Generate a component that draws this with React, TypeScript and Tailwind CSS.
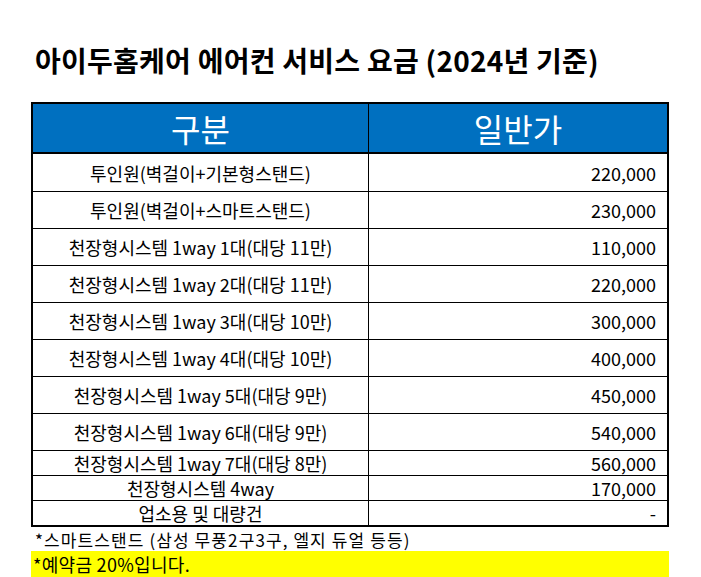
const rows: { name: string; price: string; h: string }[] = [
  { name: "투인원(벽걸이+기본형스탠드)", price: "220,000", h: "h-[38px]" },
  { name: "투인원(벽걸이+스마트스탠드)", price: "230,000", h: "h-[37px]" },
  { name: "천장형시스템 1way 1대(대당 11만)", price: "110,000", h: "h-[37px]" },
  { name: "천장형시스템 1way 2대(대당 11만)", price: "220,000", h: "h-[37px]" },
  { name: "천장형시스템 1way 3대(대당 10만)", price: "300,000", h: "h-[37px]" },
  { name: "천장형시스템 1way 4대(대당 10만)", price: "400,000", h: "h-[37px]" },
  { name: "천장형시스템 1way 5대(대당 9만)", price: "450,000", h: "h-[37px]" },
  { name: "천장형시스템 1way 6대(대당 9만)", price: "540,000", h: "h-[37px]" },
  { name: "천장형시스템 1way 7대(대당 8만)", price: "560,000", h: "h-[25px]" },
  { name: "천장형시스템 4way", price: "170,000", h: "h-[25px]" },
  { name: "업소용 및 대량건", price: "-", h: "h-[24px]" },
];

export default function App() {
  return (
    <div className="w-[701px] h-[577px] overflow-hidden bg-white text-black font-['Noto_Sans_CJK_KR','Noto_Sans',sans-serif]">
      {/* 제목 */}
      <h1 className="pt-[44px] pl-[35px] text-[28px] tracking-[0.25px] leading-[32px] font-bold whitespace-nowrap">
        아이두홈케어 에어컨 서비스 요금 (2024년 기준)
      </h1>

      {/* 요금표 */}
      <div className="mt-[26px] ml-[31px] w-[638px] border-2 border-black">
        <div className="grid grid-cols-[336px_298px] h-[50px] bg-[#0070c0] border-b-2 border-black text-white text-[32px] leading-none">
          <div className="flex items-center justify-center border-r border-black">구분</div>
          <div className="flex items-center justify-center">일반가</div>
        </div>
        {rows.map((row, i) => (
          <div
            key={row.name}
            className={`grid grid-cols-[336px_298px] ${row.h} ${i < rows.length - 1 ? "border-b border-black" : ""} text-[18px] leading-none`}
          >
            <div className="flex items-center justify-center border-r border-black whitespace-nowrap">{row.name}</div>
            <div className="flex items-center justify-end pr-[11px]">{row.price}</div>
          </div>
        ))}
      </div>

      <div className="h-[24px] pl-[35px] flex items-center text-[17px] tracking-[1.1px] leading-none whitespace-nowrap">
        *스마트스탠드 (삼성 무풍2구3구, 엘지 듀얼 등등)
      </div>
      <div className="ml-[31px] w-[638px] h-[26px] bg-[#ffff00] pl-[2px] flex items-center text-[18px] tracking-[0.3px] leading-none">
        *예약금 20%입니다.
      </div>
    </div>
  );
}
